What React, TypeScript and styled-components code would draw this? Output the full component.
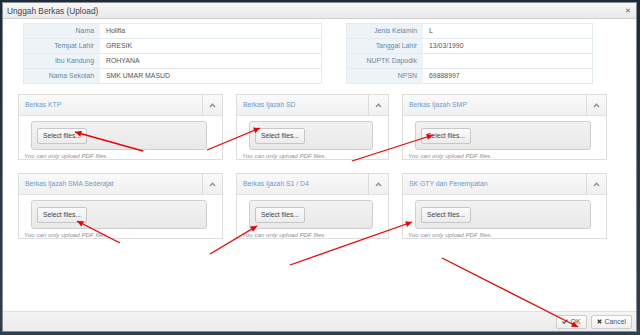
import React from "react";
import styled, { createGlobalStyle } from "styled-components";

const LEFT_INFO = [
  { label: "Nama", value: "Holifia" },
  { label: "Tempat Lahir", value: "GRESIK" },
  { label: "Ibu Kandung", value: "ROHYANA" },
  { label: "Nama Sekolah", value: "SMK UMAR MASUD" },
];

const RIGHT_INFO = [
  { label: "Jenis Kelamin", value: "L" },
  { label: "Tanggal Lahir", value: "13/03/1990" },
  { label: "NUPTK Dapodik", value: "" },
  { label: "NPSN", value: "69888997" },
];

const ROWS: Array<Array<{ title: string; width: number }>> = [
  [
    { title: "Berkas KTP", width: 205 },
    { title: "Berkas Ijazah SD", width: 153 },
    { title: "Berkas Ijazah SMP", width: 205 },
  ],
  [
    { title: "Berkas Ijazah SMA Sederajat", width: 205 },
    { title: "Berkas Ijazah S1 / D4", width: 153 },
    { title: "SK GTY dan Penempatan", width: 205 },
  ],
];

// red annotation arrows: [x1, y1, x2 (head), y2 (head)]
const ARROWS: Array<[number, number, number, number]> = [
  [143, 151, 75, 132],
  [207, 150, 260, 128],
  [352, 161, 433, 135],
  [120, 243, 77, 221],
  [210, 254, 257, 226],
  [290, 265, 412, 222],
  [442, 258, 578, 327],
];

const Global = createGlobalStyle`
  html, body {
    margin: 0;
    padding: 0;
    background: #2a3644;
    font-family: "Liberation Sans", Arial, sans-serif;
  }
`;

const Page = styled.div`
  width: 640px;
  height: 335px;
  padding: 2px 3px 3px 2px;
  box-sizing: border-box;
  position: relative;
  background: linear-gradient(#1d2c3c, #2f3f52);
`;

const Dialog = styled.div`
  width: 635px;
  height: 330px;
  display: flex;
  flex-direction: column;
  background: #fff;
  border: 1px solid #8a8a8a;
  box-sizing: border-box;
`;

const TitleBar = styled.div`
  height: 15px;
  display: flex;
  align-items: center;
  justify-content: space-between;
  padding: 0 5px 0 4px;
  background: linear-gradient(#f7f7f7, #e9e9e9);
  border-bottom: 1px solid #d0d0d0;
  font-size: 8.3px;
  color: #444;
`;

const Close = styled.span`
  font-size: 7px;
  color: #666;
  line-height: 1;
`;

const Body = styled.div`
  flex: 1;
  padding: 4px 0 0 15px;
`;

const InfoRow = styled.div`
  display: flex;
  gap: 24px;
  padding-left: 5px;
`;

const InfoTable = styled.div<{ $width: number }>`
  width: ${p => p.$width}px;
  border: 1px solid #e3eaf0;
  display: grid;
  grid-template-columns: 76px 1fr;
`;

const Label = styled.div`
  height: 14px;
  line-height: 14px;
  padding-right: 6px;
  text-align: right;
  background: #eef3f7;
  color: #6a86a3;
  font-size: 6.9px;
  border-bottom: 1px solid #e3eaf0;
  &:nth-last-child(2) {
    border-bottom: none;
  }
`;

const Value = styled.div`
  height: 14px;
  line-height: 14px;
  padding-left: 6px;
  color: #555;
  font-size: 6.9px;
  border-bottom: 1px solid #e3eaf0;
  &:last-child {
    border-bottom: none;
  }
`;

const PanelRow = styled.div<{ $top: number }>`
  display: flex;
  gap: 13px;
  margin-top: ${p => p.$top}px;
`;

const Panel = styled.div<{ $width: number }>`
  width: ${p => p.$width}px;
  height: 66px;
  border: 1px solid #dddddd;
  box-sizing: border-box;
  display: flex;
  flex-direction: column;
`;

const PanelHead = styled.div`
  height: 20px;
  display: flex;
  background: linear-gradient(#fafafa, #f0f0f0);
  border-bottom: 1px solid #e2e2e2;
`;

const PanelTitle = styled.div`
  flex: 1;
  padding-left: 6px;
  line-height: 20px;
  font-size: 6.8px;
  color: #6a9ad0;
`;

const Toggle = styled.div`
  width: 19px;
  border-left: 1px solid #dcdcdc;
  display: flex;
  align-items: center;
  justify-content: center;
`;

const DropZone = styled.div`
  margin: 5px 15px 0 12px;
  height: 27px;
  border: 1px solid #cfcfcf;
  border-radius: 3px;
  background: linear-gradient(#f2f2f2, #e9e9e9);
  display: flex;
  align-items: center;
  padding-left: 5px;
`;

const SelectButton = styled.div`
  height: 14px;
  padding: 0 5px;
  line-height: 14px;
  font-size: 6.7px;
  color: #444;
  border: 1px solid #c7c7c7;
  border-radius: 2px;
  background: linear-gradient(#fbfbfb, #ececec);
`;

const Hint = styled.div`
  margin: 2px 0 0 5px;
  font-size: 6.2px;
  font-style: italic;
  color: #8f8f8f;
`;

const Footer = styled.div`
  height: 19px;
  display: flex;
  align-items: center;
  justify-content: flex-end;
  gap: 4px;
  padding-right: 4px;
  background: linear-gradient(#f4f4f4, #ebebeb);
  border-top: 1px solid #e0e0e0;
`;

const FooterButton = styled.div`
  height: 12px;
  display: flex;
  align-items: center;
  gap: 3px;
  padding: 0 5px;
  font-size: 6.9px;
  color: #555;
  border: 1px solid #cccccc;
  border-radius: 2px;
  background: linear-gradient(#fdfdfd, #efefef);
`;

const Overlay = styled.svg`
  position: absolute;
  left: 0;
  top: 0;
  pointer-events: none;
`;

const Chevron = () => (
  <svg width="7" height="5" viewBox="0 0 7 5">
    <polyline points="1,4 3.5,1.3 6,4" fill="none" stroke="#8c8c8c" strokeWidth="1.3" />
  </svg>
);

const Arrow = ({ a }: { a: [number, number, number, number] }) => {
  const [x1, y1, x2, y2] = a;
  const ang = Math.atan2(y2 - y1, x2 - x1);
  const len = 7;
  const spread = 0.45;
  const p1 = [x2 - len * Math.cos(ang - spread), y2 - len * Math.sin(ang - spread)];
  const p2 = [x2 - len * Math.cos(ang + spread), y2 - len * Math.sin(ang + spread)];
  return (
    <g>
      <line x1={x1} y1={y1} x2={x2} y2={y2} stroke="#f00000" strokeWidth="1.3" />
      <polygon points={`${x2},${y2} ${p1[0]},${p1[1]} ${p2[0]},${p2[1]}`} fill="#f00000" />
    </g>
  );
};

const App = () => {
  return (
    <Page>
      <Global />
      <Dialog>
        <TitleBar>
          <span>Unggah Berkas (Upload)</span>
          <Close>✕</Close>
        </TitleBar>

        <Body>
          <InfoRow>
            <InfoTable $width={297}>
              {LEFT_INFO.map(r => (
                <React.Fragment key={r.label}>
                  <Label>{r.label}</Label>
                  <Value>{r.value}</Value>
                </React.Fragment>
              ))}
            </InfoTable>
            <InfoTable $width={245}>
              {RIGHT_INFO.map(r => (
                <React.Fragment key={r.label}>
                  <Label>{r.label}</Label>
                  <Value>{r.value}</Value>
                </React.Fragment>
              ))}
            </InfoTable>
          </InfoRow>

          {ROWS.map((row, i) => (
            <PanelRow key={i} $top={i === 0 ? 10 : 13}>
              {row.map(p => (
                <Panel key={p.title} $width={p.width}>
                  <PanelHead>
                    <PanelTitle>{p.title}</PanelTitle>
                    <Toggle>
                      <Chevron />
                    </Toggle>
                  </PanelHead>
                  <DropZone>
                    <SelectButton>Select files...</SelectButton>
                  </DropZone>
                  <Hint>You can only upload PDF files.</Hint>
                </Panel>
              ))}
            </PanelRow>
          ))}
        </Body>

        <Footer>
          <FooterButton>
            <svg width="6" height="5" viewBox="0 0 6 5">
              <polyline points="0.5,2.5 2.2,4.3 5.5,0.7" fill="none" stroke="#555" strokeWidth="1.2" />
            </svg>
            OK
          </FooterButton>
          <FooterButton>
            <svg width="5" height="5" viewBox="0 0 5 5">
              <path d="M0.8 0.8 L4.2 4.2 M4.2 0.8 L0.8 4.2" stroke="#333" strokeWidth="1.3" />
            </svg>
            Cancel
          </FooterButton>
        </Footer>
      </Dialog>

      <Overlay width="640" height="335">
        {ARROWS.map((a, i) => (
          <Arrow key={i} a={a} />
        ))}
      </Overlay>
    </Page>
  );
};

export default App;
